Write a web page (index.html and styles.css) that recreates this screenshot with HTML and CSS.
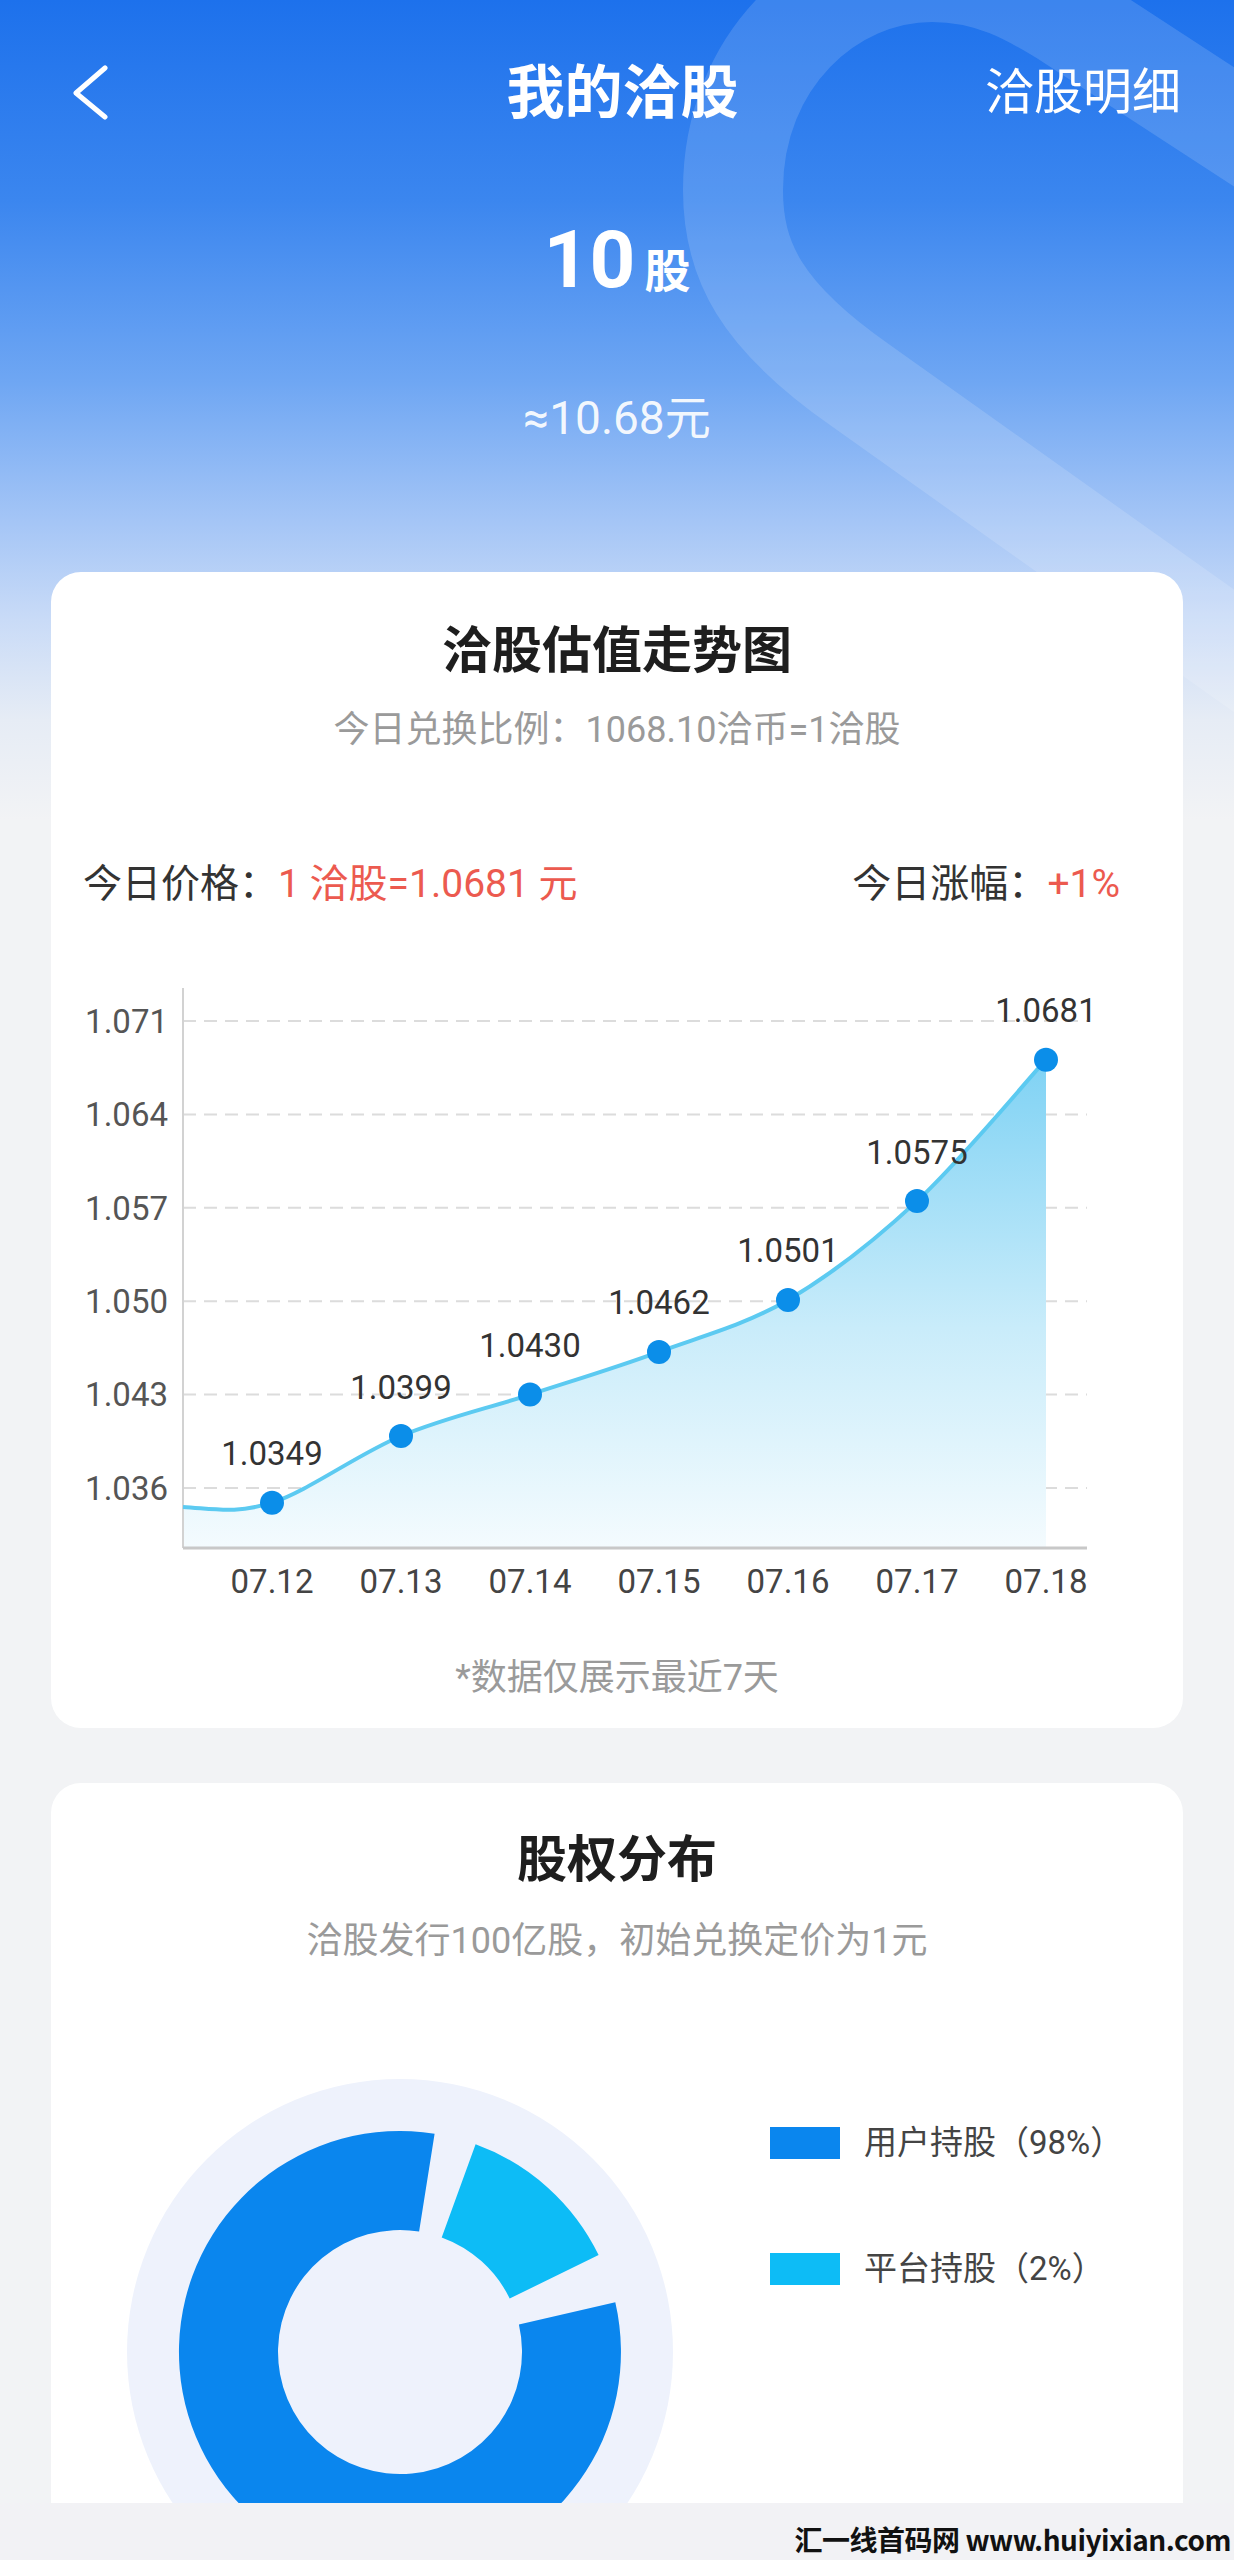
FILE: index.html
```html
<!DOCTYPE html>
<html lang="zh-CN">
<head>
    <meta charset="UTF-8">
    <meta name="viewport" content="width=device-width, initial-scale=1.0">
    <title>我的洽股</title>
    <link rel="stylesheet" href="styles.css">
</head>
<body>
    <div class="page">
        <svg class="ribbon" width="1234" height="720" viewBox="0 0 1234 720">
            <path d="M1320 712 L860 385 C760 315 733 260 733 190 C733 60 830 -28 932 -28 C990 -28 1030 -5 1070 20 L1320 183" />
        </svg>

        <div class="topbar">
            <div class="back">
                <svg width="44" height="60" viewBox="0 0 44 60">
                    <path d="M41 5 L12 30 L41 54" />
                </svg>
            </div>
            <h1 class="title">我的洽股</h1>
            <div class="detail-link">洽股明细</div>
        </div>

        <div class="hero">
            <div class="hero-amount"><span class="num">10</span><span class="unit">股</span></div>
            <div class="hero-value">≈10.68元</div>
        </div>

        <div class="card trend">
            <h2 class="card-title">洽股估值走势图</h2>
            <p class="card-sub">今日兑换比例：1068.10洽币=1洽股</p>
            <div class="price-row">
                <span>今日价格：<em>1 洽股=1.0681 元</em></span>
                <span>今日涨幅：<em>+1%</em></span>
            </div>

            <svg class="chart" width="1132" height="660" viewBox="0 0 1132 660">
                <defs>
                    <linearGradient id="areaFill" x1="0" y1="108" x2="0" y2="597" gradientUnits="userSpaceOnUse">
                        <stop offset="0" stop-color="#7fd2f4" />
                        <stop offset="0.55" stop-color="#c9ecfa" />
                        <stop offset="1" stop-color="#f4fbfe" />
                    </linearGradient>
                </defs>

                <g class="grid">
                    <line x1="132" y1="70" x2="1036" y2="70" />
                    <line x1="132" y1="163.4" x2="1036" y2="163.4" />
                    <line x1="132" y1="256.8" x2="1036" y2="256.8" />
                    <line x1="132" y1="350.2" x2="1036" y2="350.2" />
                    <line x1="132" y1="443.6" x2="1036" y2="443.6" />
                    <line x1="132" y1="537" x2="1036" y2="537" />
                </g>

                <path class="area" d="M132 556 C165 558 185 563 221 551.7 C257.3 539.9 307 503 350 485 C393 467 436 457.6 479 443.6 C522 429.6 565 416.7 608 400.9 C651 385.1 694 374 737 348.9 C780 323.8 823 290.1 866 250.1 C909 210.1 973.5 132.3 995 108.7 L995 597 L132 597 Z" />

                <line class="axis" x1="132" y1="37" x2="132" y2="597" />
                <line class="axis base" x1="132" y1="597" x2="1036" y2="597" />

                <g class="y-labels">
                    <text x="117" y="81.7">1.071</text>
                    <text x="117" y="175">1.064</text>
                    <text x="117" y="268.5">1.057</text>
                    <text x="117" y="362">1.050</text>
                    <text x="117" y="455.3">1.043</text>
                    <text x="117" y="548.7">1.036</text>
                </g>

                <path class="line" d="M132 556 C165 558 185 563 221 551.7 C257.3 539.9 307 503 350 485 C393 467 436 457.6 479 443.6 C522 429.6 565 416.7 608 400.9 C651 385.1 694 374 737 348.9 C780 323.8 823 290.1 866 250.1 C909 210.1 973.5 132.3 995 108.7" />

                <g class="dots">
                    <circle cx="221" cy="551.7" r="12" />
                    <circle cx="350" cy="485" r="12" />
                    <circle cx="479" cy="443.6" r="12" />
                    <circle cx="608" cy="400.9" r="12" />
                    <circle cx="737" cy="348.9" r="12" />
                    <circle cx="866" cy="250.1" r="12" />
                    <circle cx="995" cy="108.7" r="12" />
                </g>

                <g class="point-labels">
                    <text x="221" y="514.2">1.0349</text>
                    <text x="350" y="447.5">1.0399</text>
                    <text x="479" y="406">1.0430</text>
                    <text x="608" y="363.4">1.0462</text>
                    <text x="737" y="311.4">1.0501</text>
                    <text x="866" y="212.6">1.0575</text>
                    <text x="995" y="71.2">1.0681</text>
                </g>

                <g class="x-labels">
                    <text x="221" y="641.7">07.12</text>
                    <text x="350" y="641.7">07.13</text>
                    <text x="479" y="641.7">07.14</text>
                    <text x="608" y="641.7">07.15</text>
                    <text x="737" y="641.7">07.16</text>
                    <text x="866" y="641.7">07.17</text>
                    <text x="995" y="641.7">07.18</text>
                </g>
            </svg>

            <p class="card-note">*数据仅展示最近7天</p>
        </div>

        <div class="card share">
            <h2 class="card-title">股权分布</h2>
            <p class="card-sub">洽股发行100亿股，初始兑换定价为1元</p>
            <div class="share-body">
                <svg class="donut" width="560" height="560" viewBox="0 0 560 560">
                    <circle cx="280" cy="280" r="273" fill="#eef2fc" />
                    <path fill="#0a86ee" d="M495.3 230.3 A221 221 0 1 1 314.6 61.7 L299.1 159.5 A122 122 0 1 0 398.9 252.6 Z" />
                    <path fill="#0dbcf6" d="M355.6 72.3 A221 221 0 0 1 478.6 183.1 L389.7 226.5 A122 122 0 0 0 321.7 165.4 Z" />
                </svg>
                <div class="legend">
                    <div class="legend-item"><span class="swatch user"></span>用户持股（98%）</div>
                    <div class="legend-item"><span class="swatch platform"></span>平台持股（2%）</div>
                </div>
            </div>
        </div>
    </div>

    <div class="footer">汇一线首码网 www.huiyixian.com</div>
</body>
</html>
```

FILE: styles.css
```css
body {
    margin: 0;
    padding: 0;
    width: 1234px;
    font-family: Roboto, "Noto Sans CJK SC", sans-serif;
    background-color: #f2f2f5;
    color: #333;
}
.page {
    position: relative;
    height: 2503px;
    overflow: hidden;
    background: linear-gradient(180deg, #1d71ec 0, #3b86ef 200px, #6ea6f3 380px, #a4c5f6 520px, #c9dbf7 620px, #e6ecf5 720px, #f2f3f5 820px, #f2f3f5 100%);
}
.ribbon {
    position: absolute;
    top: 0;
    left: 0;
}
.ribbon path {
    fill: none;
    stroke: rgba(255, 255, 255, 0.14);
    stroke-width: 100;
}
.topbar, .hero, .card {
    position: relative;
}

/* header */
.topbar {
    display: grid;
    grid-template-columns: 1fr auto 1fr;
    align-items: center;
    height: 186px;
    padding: 0 53px 0 64px;
}
.back {
    display: flex;
    align-items: center;
}
.back path {
    fill: none;
    stroke: #fff;
    stroke-width: 5;
    stroke-linecap: round;
    stroke-linejoin: round;
}
.title {
    margin: 0;
    font-size: 58px;
    font-weight: 700;
    color: #fff;
    line-height: 80px;
}
.detail-link {
    justify-self: end;
    font-size: 49px;
    color: #fff;
    line-height: 80px;
}
.hero {
    display: flex;
    flex-direction: column;
    align-items: center;
    color: #fff;
}
.hero-amount {
    display: flex;
    align-items: baseline;
    margin-top: 34px;
    line-height: 80px;
}
.hero-amount .num {
    font-size: 80px;
    font-weight: 700;
}
.hero-amount .unit {
    margin-left: 9px;
    font-size: 46px;
    font-weight: 700;
}
.hero-value {
    margin-top: 77px;
    font-size: 46px;
    line-height: 60px;
    color: rgba(255, 255, 255, 0.92);
}

/* cards */
.card {
    display: flex;
    flex-direction: column;
    align-items: center;
    margin: 0 51px;
    background-color: #fff;
    border-radius: 30px;
}
.trend {
    margin-top: 124px;
    padding-bottom: 25px;
}
.share {
    margin-top: 55px;
}
.card-title {
    margin: 44px 0 0;
    font-size: 50px;
    font-weight: 700;
    line-height: 70px;
    color: #1e1e1e;
}
.share .card-title {
    margin-top: 42px;
}
.card-sub {
    margin: 19px 0 0;
    font-size: 36px;
    line-height: 50px;
    color: #9a9a9a;
}
.share .card-sub {
    margin-top: 21px;
}
.price-row {
    display: flex;
    justify-content: space-between;
    align-self: stretch;
    margin-top: 101px;
    padding: 0 63px 0 32px;
    font-size: 39px;
    line-height: 56px;
    color: #333;
}
.price-row em {
    font-style: normal;
    color: #ec5a4f;
}
.chart {
    display: block;
    margin-top: 39px;
}
.chart .grid line {
    stroke: #dcdcdc;
    stroke-width: 2;
    stroke-dasharray: 13 8;
}
.chart .area {
    fill: url(#areaFill);
}
.chart .axis {
    stroke: #d2d2d2;
    stroke-width: 2;
}
.chart .axis.base {
    stroke: #c8c8c8;
    stroke-width: 3;
}
.chart .line {
    fill: none;
    stroke: #5ccaf1;
    stroke-width: 4;
}
.chart .dots circle {
    fill: #0b8ee9;
}
.chart text {
    font-family: Roboto, sans-serif;
    font-size: 33px;
}
.chart .y-labels text {
    text-anchor: end;
    fill: #555;
}
.chart .point-labels text {
    text-anchor: middle;
    fill: #333;
}
.chart .x-labels text {
    text-anchor: middle;
    fill: #444;
}
.card-note {
    margin: 42px 0 0;
    font-size: 36px;
    line-height: 50px;
    color: #9a9a9a;
}

/* share distribution */
.share-body {
    display: flex;
    align-items: flex-start;
    align-self: stretch;
    margin-top: 106px;
}
.donut {
    display: block;
    margin-left: 69px;
    flex-shrink: 0;
}
.legend {
    display: flex;
    flex-direction: column;
    gap: 76px;
    margin: 46px 0 0 90px;
}
.legend-item {
    display: flex;
    align-items: center;
    font-size: 33px;
    line-height: 50px;
    color: #444;
}
.swatch {
    width: 70px;
    height: 32px;
    margin-right: 24px;
}
.swatch.user {
    background-color: #0a86ee;
}
.swatch.platform {
    background-color: #0dbcf6;
}

/* bottom strip */
.footer {
    display: flex;
    justify-content: flex-end;
    align-items: flex-end;
    height: 57px;
    box-sizing: border-box;
    padding: 0 3px 7px 0;
    font-family: "Noto Sans CJK SC", sans-serif;
    font-size: 28px;
    font-weight: 700;
    line-height: 28px;
    letter-spacing: -0.5px;
    color: #111;
}
```
